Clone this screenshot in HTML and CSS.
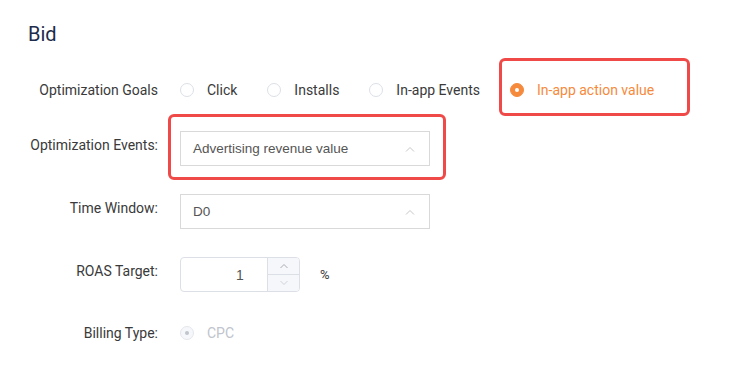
FILE: index.html
```html
<!DOCTYPE html>
<html lang="en">
<head>
    <meta charset="UTF-8">
    <meta name="viewport" content="width=device-width, initial-scale=1.0">
    <title>Bid</title>
    <link rel="stylesheet" href="styles.css">
</head>
<body>
    <div class="panel">
        <h2 class="panel-title">Bid</h2>

        <div class="form-row row-radio">
            <label class="form-label">Optimization Goals</label>
            <div class="radio-group">
                <span class="radio"><span class="radio-dot"></span>Click</span>
                <span class="radio"><span class="radio-dot"></span>Installs</span>
                <span class="radio"><span class="radio-dot"></span>In-app Events</span>
                <span class="radio checked mark mark-goal"><span class="radio-dot"></span>In-app action value</span>
            </div>
        </div>

        <div class="form-row">
            <label class="form-label">Optimization Events:</label>
            <div class="select mark mark-select">
                <span>Advertising revenue value</span>
                <svg class="chevron" width="10" height="6" viewBox="0 0 10 6"><path d="M1 5.5 L5 1.5 L9 5.5" fill="none" stroke="#c6c6c6" stroke-width="1"/></svg>
            </div>
        </div>

        <div class="form-row">
            <label class="form-label">Time Window:</label>
            <div class="select">
                <span>D0</span>
                <svg class="chevron" width="10" height="6" viewBox="0 0 10 6"><path d="M1 5.5 L5 1.5 L9 5.5" fill="none" stroke="#c6c6c6" stroke-width="1"/></svg>
            </div>
        </div>

        <div class="form-row">
            <label class="form-label">ROAS Target:</label>
            <div class="number-input">
                <input type="text" value="1">
                <div class="spinner">
                    <span class="spin-btn">
                        <svg width="10" height="6" viewBox="0 0 10 6"><path d="M1.5 5 L5 1.5 L8.5 5" fill="none" stroke="#a8abb2" stroke-width="1"/></svg>
                    </span>
                    <span class="spin-btn">
                        <svg width="10" height="6" viewBox="0 0 10 6"><path d="M1.5 1 L5 4.5 L8.5 1" fill="none" stroke="#cfd2d8" stroke-width="1"/></svg>
                    </span>
                </div>
            </div>
            <span class="unit">%</span>
        </div>

        <div class="form-row row-radio">
            <label class="form-label">Billing Type:</label>
            <div class="radio-group">
                <span class="radio disabled"><span class="radio-dot"></span>CPC</span>
            </div>
        </div>
    </div>
</body>
</html>
```

FILE: styles.css
```css
* {
    margin: 0;
    padding: 0;
    box-sizing: border-box;
}

body {
    width: 100vw;
    height: 100vh;
    overflow: hidden;
    background: #fff;
    font-family: Roboto, "Liberation Sans", sans-serif;
    color: #3a3a3a;
}

.panel {
    padding: 22px 0 0 28px;
}

.panel-title {
    font-size: 20px;
    font-weight: 400;
    line-height: 24px;
    color: #1d2c4c;
    margin-bottom: 31px;
}

.form-row {
    display: flex;
    align-items: flex-start;
    margin-bottom: 28px;
}

.form-label {
    width: 130px;
    margin-right: 22px;
    text-align: right;
    font-size: 14px;
    line-height: 28px;
    color: #3a3a3a;
}

.row-radio {
    align-items: center;
    height: 26px;
}

.row-radio .form-label {
    line-height: 26px;
}

/* radios */
.radio-group {
    display: flex;
    align-items: center;
}

.radio {
    display: flex;
    align-items: center;
    font-size: 14px;
    color: #3a3a3a;
    margin-right: 30px;
    line-height: 20px;
}

.radio-dot {
    width: 14px;
    height: 14px;
    border: 1px solid #dcdfe6;
    border-radius: 50%;
    margin-right: 13px;
    background: #fff;
    position: relative;
}

.radio.checked {
    color: #f68a3c;
}

.radio.checked .radio-dot {
    background: #f68a3c;
    border-color: #f68a3c;
}

.radio.checked .radio-dot::after,
.radio.disabled .radio-dot::after {
    content: '';
    position: absolute;
    top: 50%;
    left: 50%;
    width: 4px;
    height: 4px;
    margin: -2px 0 0 -2px;
    border-radius: 50%;
    background: #fff;
}

.radio.disabled {
    color: #c0c4cc;
}

.radio.disabled .radio-dot {
    background: #f5f7fa;
    border-color: #e4e7ed;
}

.radio.disabled .radio-dot::after {
    background: #c0c4cc;
}

/* red highlight annotations */
.mark {
    position: relative;
}

.mark::after {
    content: '';
    position: absolute;
    border: 3px solid #f04a48;
    border-radius: 6px;
    pointer-events: none;
}

.mark-goal::after {
    top: -22px;
    bottom: -16px;
    left: -11px;
    right: -36px;
}

.mark-select::after {
    top: -18px;
    bottom: -15px;
    left: -13px;
    right: -17px;
}

/* selects */
.select {
    width: 250px;
    height: 35px;
    border: 1px solid #d9d9d9;
    display: flex;
    align-items: center;
    justify-content: space-between;
    padding: 0 14px 0 12px;
    font-family: "Liberation Sans", Arial, sans-serif;
    font-size: 13.5px;
    color: #555;
    background: #fff;
}

.chevron {
    display: block;
}

/* number input */
.number-input {
    position: relative;
    width: 120px;
    height: 35px;
}

.number-input input {
    width: 100%;
    height: 100%;
    border: 1px solid #dcdfe6;
    border-radius: 4px;
    text-align: center;
    font-family: "Liberation Sans", Arial, sans-serif;
    font-size: 14px;
    color: #555;
    outline: none;
}

.spinner {
    position: absolute;
    top: 1px;
    right: 1px;
    bottom: 1px;
    width: 32px;
    display: flex;
    flex-direction: column;
    border-left: 1px solid #dcdfe6;
    border-radius: 0 3px 3px 0;
    overflow: hidden;
}

.spin-btn {
    flex: 1;
    display: flex;
    align-items: center;
    justify-content: center;
    background: #f5f7fa;
}

.spin-btn + .spin-btn {
    border-top: 1px solid #dcdfe6;
}

.unit {
    margin-left: 20px;
    font-size: 13px;
    line-height: 35px;
    color: #3a3a3a;
}
```
